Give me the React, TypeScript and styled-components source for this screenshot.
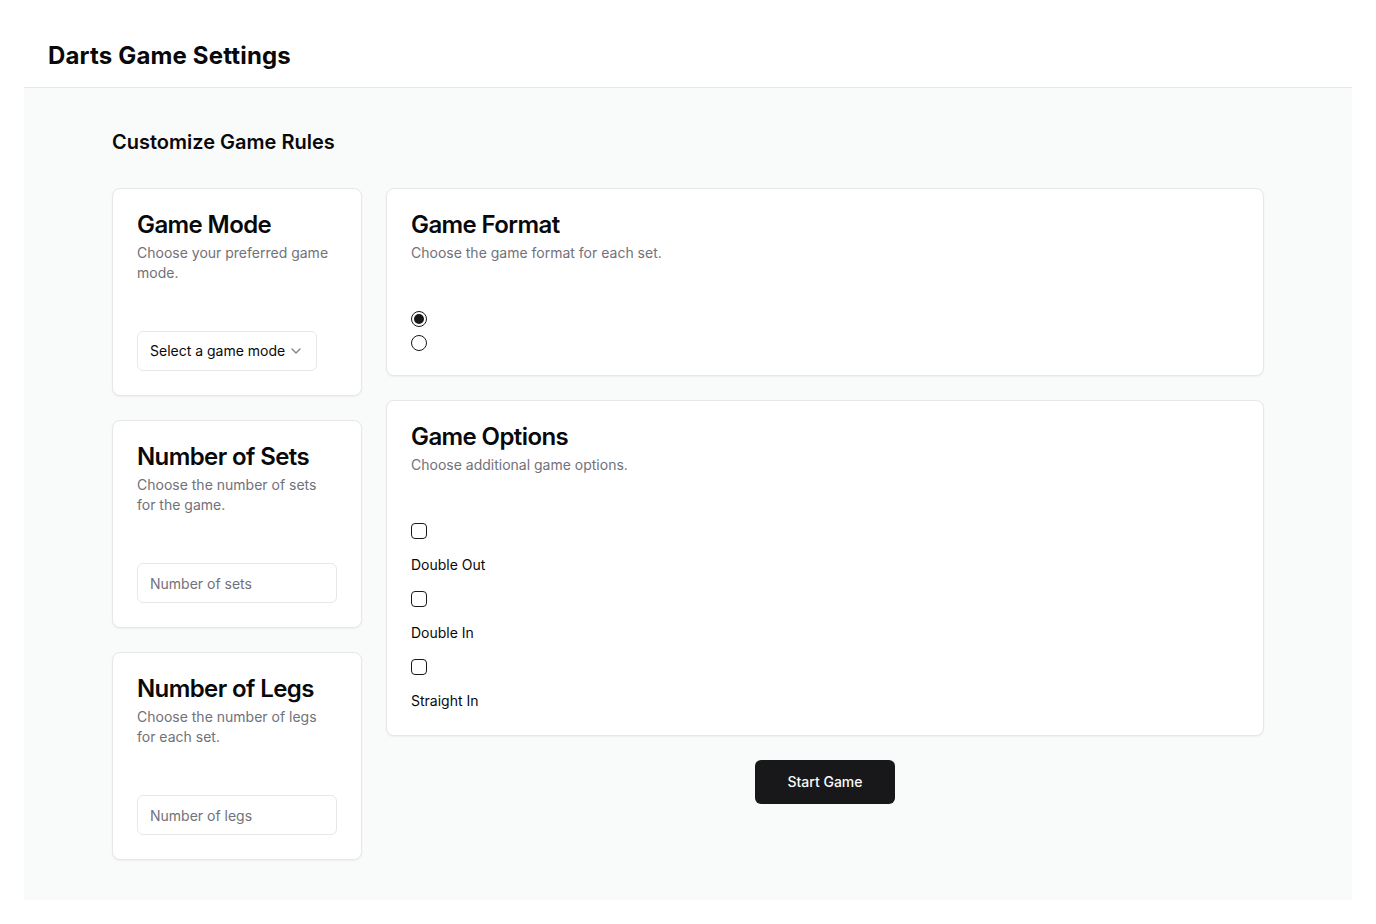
import React, { useState } from "react";
import styled, { createGlobalStyle } from "styled-components";

const GlobalStyle = createGlobalStyle`
  * { box-sizing: border-box; }
  html, body { margin: 0; padding: 0; background: #ffffff; }
  body {
    font-family: Inter, "Noto Sans", "Liberation Sans", sans-serif;
    color: #09090b;
    -webkit-font-smoothing: antialiased;
  }
`;

const Page = styled.div`
  padding: 24px 24px 0 24px;
  display: flex;
  flex-direction: column;
`;

const Header = styled.header`
  padding: 16px 24px;
  border-bottom: 1px solid #e5e7eb;
  height: 64px;
  display: flex;
  align-items: center;
`;

const PageTitle = styled.h1`
  margin: 0;
  font-size: 24px;
  line-height: 32px;
  font-weight: 700;
  letter-spacing: 0.16px;
`;

const Main = styled.main`
  background: #f9fafa;
  padding: 40px 0 40px 0;
`;

const Container = styled.div`
  max-width: 1152px;
  margin: 0 auto;
  display: flex;
  flex-direction: column;
  gap: 32px;
`;

const SectionTitle = styled.h2`
  margin: 0;
  font-size: 20px;
  line-height: 28px;
  font-weight: 600;
`;

const Grid = styled.div`
  display: grid;
  grid-template-columns: 250px 1fr;
  gap: 24px;
  align-items: start;
`;

const Column = styled.div`
  display: flex;
  flex-direction: column;
  gap: 24px;
`;

const Card = styled.section`
  background: #ffffff;
  border: 1px solid #e5e7eb;
  border-radius: 8px;
  box-shadow: 0 1px 2px rgba(0, 0, 0, 0.05);
`;

const CardHeader = styled.div`
  padding: 24px;
  display: flex;
  flex-direction: column;
  gap: 6px;
`;

const CardTitle = styled.h3`
  margin: 0;
  font-size: 24px;
  line-height: 24px;
  font-weight: 600;
  letter-spacing: -0.6px;
`;

const CardDescription = styled.p`
  margin: 0;
  font-size: 14px;
  line-height: 20px;
  color: #71717a;
`;

const CardContent = styled.div`
  padding: 24px;
  display: flex;
  flex-direction: column;
  gap: 16px;
`;

const SelectTrigger = styled.button`
  width: 180px;
  height: 40px;
  display: flex;
  align-items: center;
  justify-content: space-between;
  padding: 0 12px;
  border: 1px solid #e5e7eb;
  border-radius: 6px;
  background: #ffffff;
  font-family: inherit;
  font-size: 14px;
  line-height: 20px;
  color: #09090b;
  cursor: pointer;
`;

const Input = styled.input`
  width: 100%;
  height: 40px;
  padding: 0 12px;
  border: 1px solid #e5e7eb;
  border-radius: 6px;
  background: #ffffff;
  font-family: inherit;
  font-size: 14px;
  color: #09090b;
  outline: none;
  &::placeholder { color: #71717a; }
`;

const RadioGroup = styled.div`
  display: flex;
  flex-direction: column;
  gap: 8px;
`;

const RadioItem = styled.button<{ $checked: boolean }>`
  width: 16px;
  height: 16px;
  padding: 0;
  border-radius: 50%;
  border: 1px solid #18181b;
  background: #ffffff;
  display: flex;
  align-items: center;
  justify-content: center;
  cursor: pointer;
  &::after {
    content: "";
    width: 10px;
    height: 10px;
    border-radius: 50%;
    background: #18181b;
    display: ${(p) => (p.$checked ? "block" : "none")};
  }
`;

const CheckBox = styled.button`
  width: 16px;
  height: 16px;
  padding: 0;
  border-radius: 4px;
  border: 1px solid #18181b;
  background: #ffffff;
  cursor: pointer;
`;

const Label = styled.label`
  font-size: 14px;
  line-height: 20px;
  font-weight: 400;
  color: #09090b;
`;

const ButtonRow = styled.div`
  display: flex;
  justify-content: center;
`;

const PrimaryButton = styled.button`
  height: 44px;
  padding: 0 32px 1px 32px;
  border: none;
  border-radius: 6px;
  background: #18181b;
  color: #fafafa;
  font-family: inherit;
  font-size: 14px;
  font-weight: 500;
  cursor: pointer;
`;

const Chevron = () => (
  <svg width="16" height="16" viewBox="0 0 24 24" fill="none" stroke="#09090b" strokeOpacity="0.5" strokeWidth="2" strokeLinecap="round" strokeLinejoin="round">
    <path d="m6 9 6 6 6-6" />
  </svg>
);

export default function App() {
  const [format, setFormat] = useState(0);
  const options = ["Double Out", "Double In", "Straight In"];
  return (
    <>
      <GlobalStyle />
      <Page>
        <Header>
          <PageTitle>Darts Game Settings</PageTitle>
        </Header>
        <Main>
          <Container>
            <SectionTitle>Customize Game Rules</SectionTitle>
            <Grid>
              <Column>
                <Card>
                  <CardHeader>
                    <CardTitle>Game Mode</CardTitle>
                    <CardDescription>Choose your preferred game mode.</CardDescription>
                  </CardHeader>
                  <CardContent>
                    <SelectTrigger>
                      <span>Select a game mode</span>
                      <Chevron />
                    </SelectTrigger>
                  </CardContent>
                </Card>
                <Card>
                  <CardHeader>
                    <CardTitle>Number of Sets</CardTitle>
                    <CardDescription>Choose the number of sets for the game.</CardDescription>
                  </CardHeader>
                  <CardContent>
                    <Input placeholder="Number of sets" />
                  </CardContent>
                </Card>
                <Card>
                  <CardHeader>
                    <CardTitle>Number of Legs</CardTitle>
                    <CardDescription>Choose the number of legs for each set.</CardDescription>
                  </CardHeader>
                  <CardContent>
                    <Input placeholder="Number of legs" />
                  </CardContent>
                </Card>
              </Column>
              <Column>
                <Card>
                  <CardHeader>
                    <CardTitle>Game Format</CardTitle>
                    <CardDescription>Choose the game format for each set.</CardDescription>
                  </CardHeader>
                  <CardContent>
                    <RadioGroup>
                      {[0, 1].map((i) => (
                        <RadioItem key={i} $checked={format === i} onClick={() => setFormat(i)} aria-label={`format ${i}`} />
                      ))}
                    </RadioGroup>
                  </CardContent>
                </Card>
                <Card>
                  <CardHeader>
                    <CardTitle>Game Options</CardTitle>
                    <CardDescription>Choose additional game options.</CardDescription>
                  </CardHeader>
                  <CardContent>
                    {options.map((o) => (
                      <React.Fragment key={o}>
                        <CheckBox aria-label={o} />
                        <Label>{o}</Label>
                      </React.Fragment>
                    ))}
                  </CardContent>
                </Card>
                <ButtonRow>
                  <PrimaryButton>Start Game</PrimaryButton>
                </ButtonRow>
              </Column>
            </Grid>
          </Container>
        </Main>
      </Page>
    </>
  );
}
